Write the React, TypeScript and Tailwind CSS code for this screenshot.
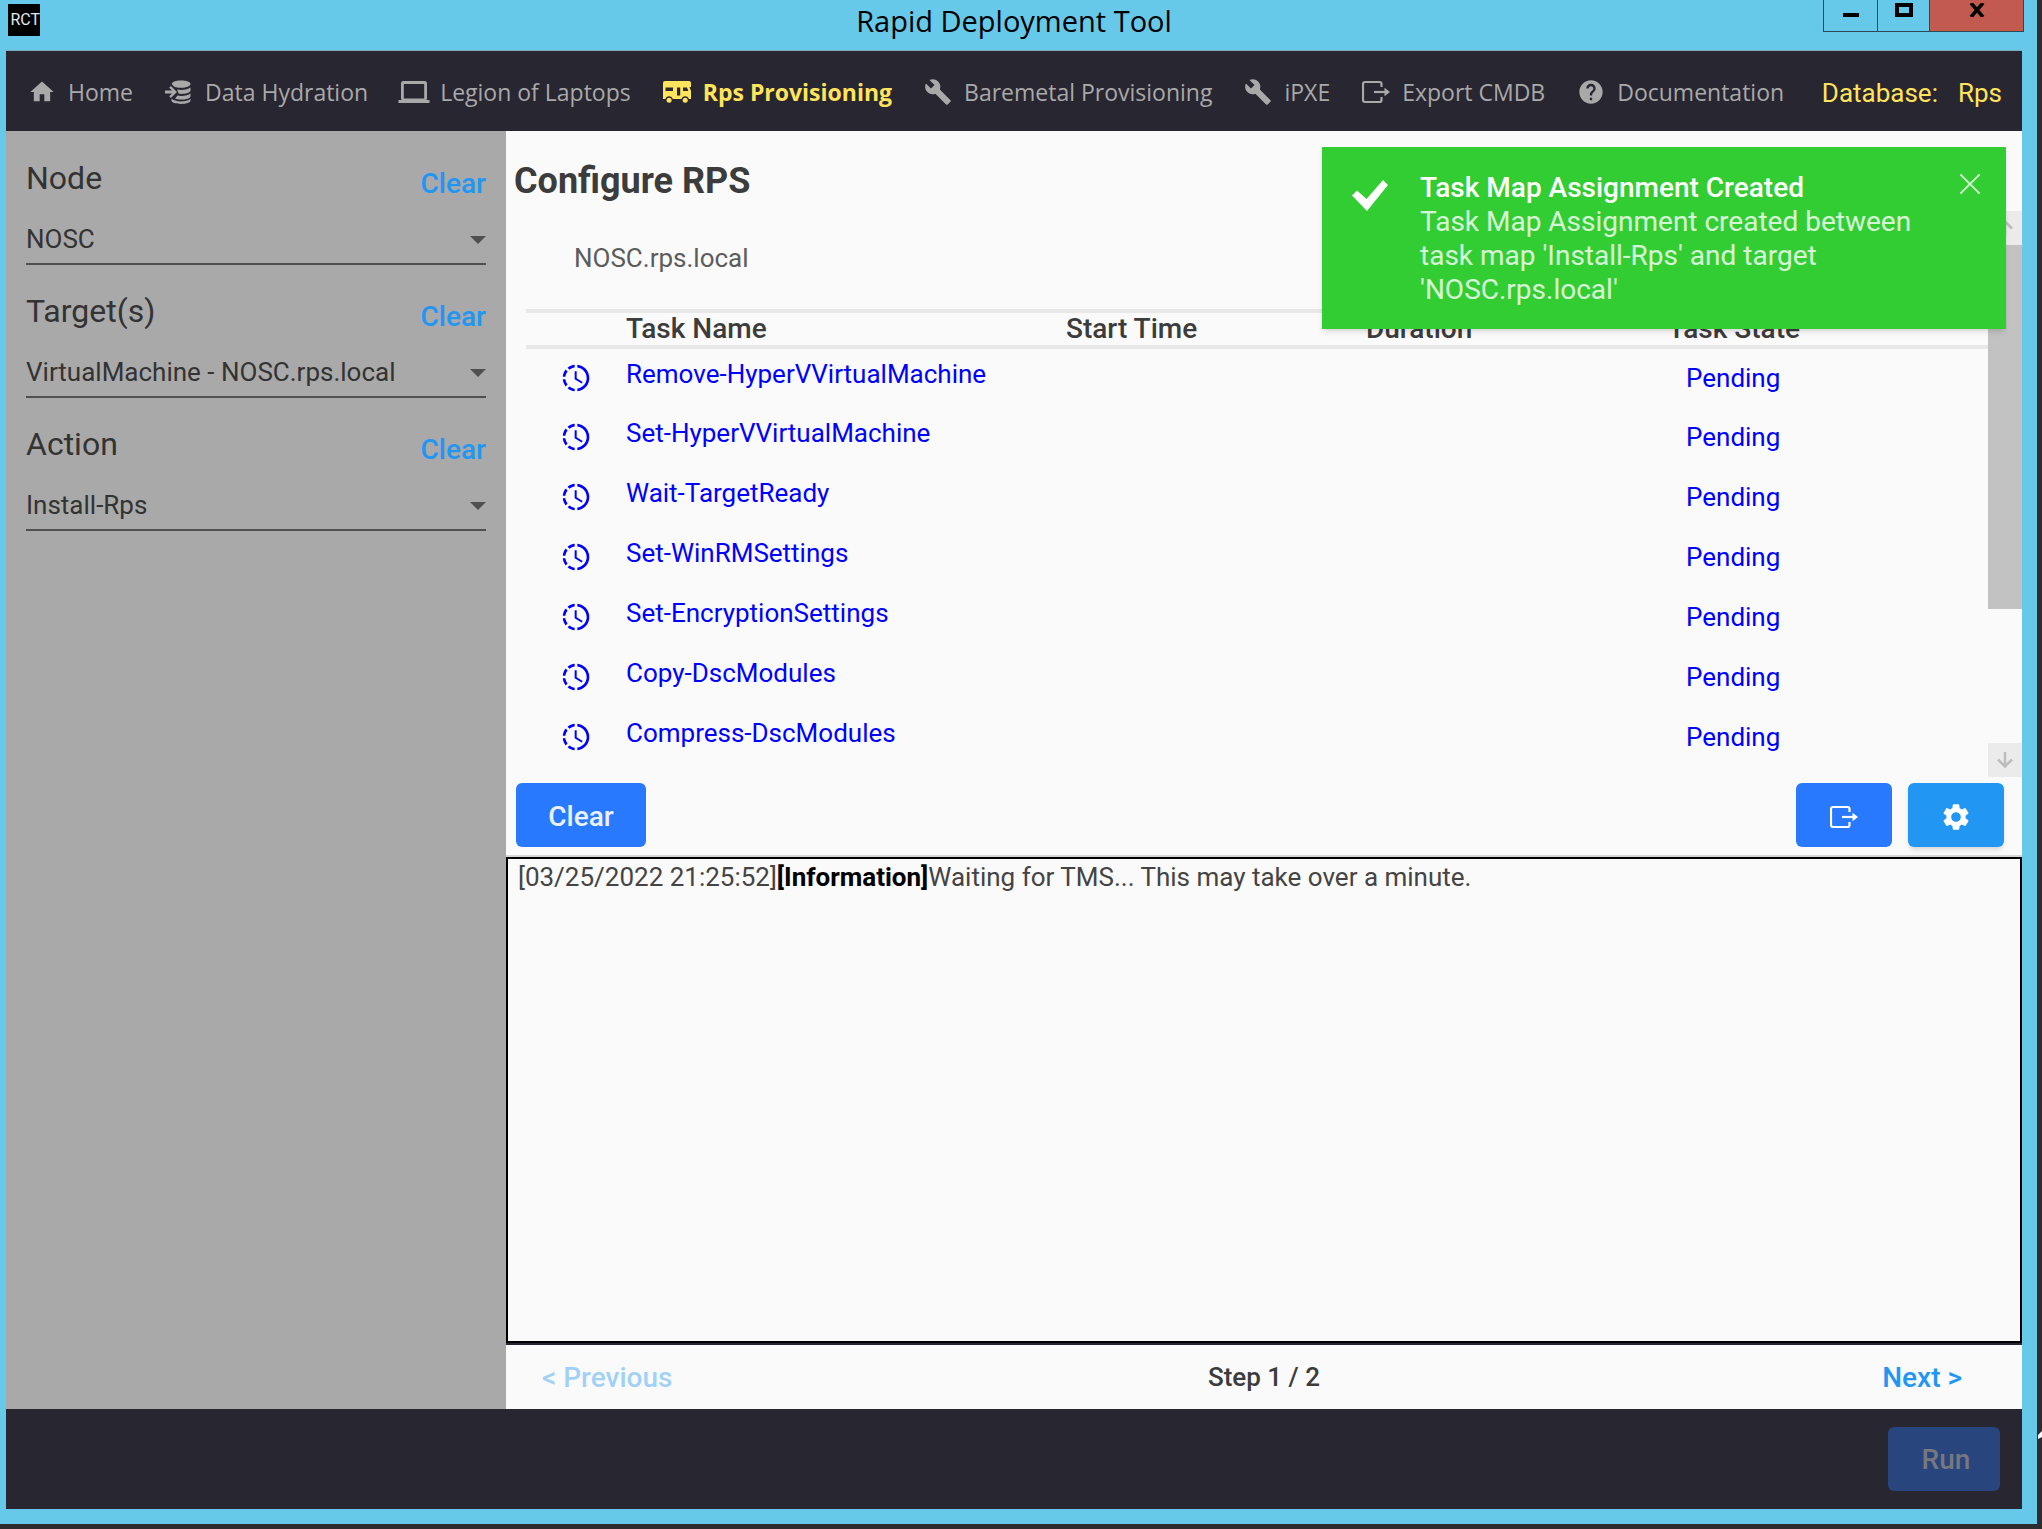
import type { ReactNode } from "react";
import { MdHome, MdBuild, MdHelp, MdSettings } from "react-icons/md";

type IconProps = { className?: string };

const DatabaseImportIcon = ({ className }: IconProps) => (
  <svg viewBox="0 0 28 28" className={className} fill="currentColor" aria-hidden="true">
    <path d="M16 2.500c5.500 0 9.500 1.500 9.500 3.500s-4 3.800-9.500 3.800c-2.600 0-5-.4-6.700-1L6.800 6.300C6.600 4 10.500 2.500 16 2.500z" />
    <path d="M12 11.600c1.300.2 2.600.3 4 .3 4.200 0 7.800-.9 9.500-2.600v3.200c0 1.900-4 3.400-9.500 3.400-.8 0-1.500 0-2.200-.1z" />
    <path d="M12.500 17.600c1.100.2 2.300.3 3.500.3 4.200 0 7.800-.9 9.500-2.600v2.900c0 1.900-4 3.400-9.500 3.400-2.300 0-4.400-.3-6-.8z" />
    <path d="M6.500 20.600c1.700 1.900 5.300 2.800 9.500 2.800s7.800-.9 9.500-2.600v1.800c0 1.900-4 3.400-9.500 3.400s-9.500-1.500-9.500-3.400z" />
    <path d="M0 12.600h7L4.200 9.800l1.700-1.700 6.100 5.900-6.100 5.900-1.700-1.700L7 15.400H0z" />
  </svg>
);

const LaptopIcon = ({ className }: IconProps) => (
  <svg viewBox="0 0 32 28" className={className} fill="currentColor" aria-hidden="true">
    <path
      fillRule="evenodd"
      d="M5.500 3h21A2.500 2.500 0 0 1 29 5.500v15a2 2 0 0 1-1 1.500h3.500v3H.5v-3H4a2 2 0 0 1-1-1.500v-15A2.500 2.500 0 0 1 5.500 3zm.3 3v14.500h20.400V6z"
    />
  </svg>
);

const RvIcon = ({ className }: IconProps) => (
  <svg viewBox="0 0 28 28" className={className} fill="currentColor" aria-hidden="true">
    <path
      fillRule="evenodd"
      d="M2 3h24a2 2 0 0 1 2 2v4h-1.500l1.500 4v8h-2.200a3.700 3.700 0 0 0-7.200 0H9.700a3.700 3.700 0 0 0-7.200 0H0V5a2 2 0 0 1 2-2zM2.500 9.500V13H10V9.500zm11.500 0V17.500h3.200V9.500zm6 0V13h5.300L24 9.500z"
    />
    <circle cx="6.100" cy="22.300" r="2.500" />
    <circle cx="22.200" cy="22.300" r="2.500" />
  </svg>
);

const ExportIcon = ({ className }: IconProps) => (
  <svg viewBox="0 0 28 28" className={className} fill="none" stroke="currentColor" strokeWidth="2.200" aria-hidden="true">
    <path d="M19.500 9V6a2 2 0 0 0-2-2H3a2 2 0 0 0-2 2v16a2 2 0 0 0 2 2h14.500a2 2 0 0 0 2-2v-3" />
    <path d="M12 14h13" />
    <path d="M22.500 9.800 28 14l-5.500 4.200z" fill="currentColor" stroke="none" />
  </svg>
);

const ProgressClockIcon = ({ className }: IconProps) => (
  <svg viewBox="0 0 24 24" className={className} fill="currentColor" aria-hidden="true">
    <path d="M13,2.03V2.05L13,4.05C17.39,4.59 20.5,8.58 19.96,12.97C19.5,16.61 16.64,19.5 13,19.93V21.93C18.5,21.38 22.5,16.5 21.95,11C21.5,6.25 17.73,2.5 13,2.03M11,2.06C9.05,2.25 7.19,3 5.67,4.26L7.1,5.74C8.22,4.84 9.57,4.26 11,4.06V2.06M4.26,5.67C3,7.19 2.25,9.04 2.05,11H4.05C4.24,9.58 4.8,8.23 5.69,7.1L4.26,5.67M2.06,13C2.26,14.96 3.03,16.81 4.27,18.33L5.69,16.9C4.81,15.77 4.24,14.42 4.06,13H2.06M7.1,18.37L5.67,19.74C7.18,21 9.04,21.79 11,22V20C9.58,19.82 8.23,19.25 7.1,18.37M12.5,7V12.25L17,14.92L16.25,16.15L11,13V7H12.5Z" />
  </svg>
);

const CheckIcon = ({ className }: IconProps) => (
  <svg viewBox="0 0 36 32" className={className} fill="currentColor" aria-hidden="true">
    <path d="M31 1l5 5-21 26L0 16.500l5-5 9.500 8.500z" />
  </svg>
);

const CloseIcon = ({ className }: IconProps) => (
  <svg viewBox="0 0 20 20" className={className} fill="none" stroke="currentColor" strokeWidth="1.800" aria-hidden="true">
    <path d="M0 0l20 20M20 0L0 20" />
  </svg>
);

const ArrowIcon = ({ className }: IconProps) => (
  <svg viewBox="0 0 16 16" className={className} fill="none" stroke="currentColor" strokeWidth="2.500" aria-hidden="true">
    <path d="M8 0v14M1 7.500l7 7 7-7" />
  </svg>
);

const navItems: { label: string; icon: ReactNode; active?: boolean }[] = [
  { label: "Home", icon: <MdHome className="size-7" /> },
  { label: "Data Hydration", icon: <DatabaseImportIcon className="size-7" /> },
  { label: "Legion of Laptops", icon: <LaptopIcon className="-mx-0.5 h-7 w-8" /> },
  { label: "Rps Provisioning", icon: <RvIcon className="size-7" />, active: true },
  { label: "Baremetal Provisioning", icon: <MdBuild className="size-7" /> },
  { label: "iPXE", icon: <MdBuild className="size-7" /> },
  { label: "Export CMDB", icon: <ExportIcon className="size-7" /> },
  { label: "Documentation", icon: <MdHelp className="size-7" /> },
];

const fields = [
  { id: "node", label: "Node", value: "NOSC" },
  { id: "targets", label: "Target(s)", value: "VirtualMachine - NOSC.rps.local" },
  { id: "action", label: "Action", value: "Install-Rps" },
];

const tasks = [
  "Remove-HyperVVirtualMachine",
  "Set-HyperVVirtualMachine",
  "Wait-TargetReady",
  "Set-WinRMSettings",
  "Set-EncryptionSettings",
  "Copy-DscModules",
  "Compress-DscModules",
];

function TitleBar() {
  return (
    <header className="relative flex h-[51px] shrink-0 items-start justify-center border-b border-[#7fa9bd]">
      <div className="absolute left-0.5 top-1 flex size-8 items-center justify-end overflow-hidden bg-black font-['Roboto',sans-serif] text-base text-gray-200">
        RCT
      </div>
      <h1 className="font-['Open_Sans',sans-serif] text-[29px] leading-[42px] text-black">Rapid Deployment Tool</h1>
      <div className="absolute -right-0.5 top-0 flex h-8 border-x border-b border-[#2c4a55] text-black">
        <button aria-label="Minimize" className="flex w-[54px] justify-center border-r border-[#2c4a55] pt-[13px]">
          <span className="h-1 w-4 bg-black" />
        </button>
        <button aria-label="Maximize" className="flex w-[52px] justify-center border-r border-[#2c4a55] pt-[3px]">
          <span className="h-3.5 w-[18px] border-4 border-black" />
        </button>
        <button aria-label="Close" className="flex w-[93px] justify-center bg-[#c35a50] pt-[3px]">
          <svg viewBox="0 0 16 14" className="h-3.5 w-4" fill="none" stroke="currentColor" strokeWidth="3.500" aria-hidden="true">
            <path d="M2 0l12 14M14 0L2 14" />
          </svg>
        </button>
      </div>
    </header>
  );
}

function NavBar() {
  return (
    <nav className="flex h-20 shrink-0 items-center justify-between bg-[#282631] pl-[22px] pr-5 whitespace-nowrap text-[#a9a9a9]">
      <div className="flex items-center gap-8 pt-0.5 font-['Open_Sans',sans-serif] text-[23px]">
        {navItems.map((item) => (
          <a
            key={item.label}
            href="#"
            className={item.active ? "flex items-center gap-3 font-bold text-[#ffe45c]" : "flex items-center gap-3"}
          >
            {item.icon}
            {item.label}
          </a>
        ))}
      </div>
      <p className="flex gap-5 pt-1 text-[26px] text-[#ffe45c]">
        <span>Database:</span>
        <span>Rps</span>
      </p>
    </nav>
  );
}

function Sidebar() {
  return (
    <aside className="flex w-[500px] shrink-0 flex-col bg-[#a9a9a9] px-5 pt-6 text-[#333]">
      {fields.map((field) => (
        <div key={field.id} className="h-[133px]">
          <div className="flex h-14 items-center justify-between">
            <label htmlFor={field.id} className="pb-2.5 text-[32px] leading-10">
              {field.label}
            </label>
            <button className="pt-0.5 text-[28px] leading-9 font-medium text-[#2196f3]">Clear</button>
          </div>
          <div className="relative">
            <select
              id={field.id}
              className="h-[54px] w-full appearance-none border-b-2 border-[#505050] bg-transparent pt-1 text-[26px] outline-none"
            >
              <option>{field.value}</option>
            </select>
            <svg viewBox="0 0 16 8" className="pointer-events-none absolute right-0 top-[25px] h-2 w-4 text-[#505050]" fill="currentColor" aria-hidden="true">
              <path d="M0 0h16L8 8z" />
            </svg>
          </div>
        </div>
      ))}
    </aside>
  );
}

function TaskTable() {
  return (
    <section className="flex h-[566px] shrink-0">
      <div className="min-w-0 flex-1 pl-5">
        <p className="flex h-[98px] items-center pb-1 pl-12 text-[26px] text-[#5c5c5c]">NOSC.rps.local</p>
        <table className="w-full table-fixed border-collapse text-[26px]">
          <colgroup>
            <col className="w-[100px]" />
            <col className="w-[440px]" />
            <col className="w-[300px]" />
            <col className="w-[302px]" />
            <col />
          </colgroup>
          <thead>
            <tr className="border-y-4 border-[#e8e8e8] text-left text-[28px] text-[#3c3c3c]">
              <th aria-label="Status" />
              <th className="p-0 leading-8 font-medium">Task Name</th>
              <th className="p-0 leading-8 font-medium">Start Time</th>
              <th className="p-0 leading-8 font-medium">Duration</th>
              <th className="p-0 leading-8 font-medium">Task State</th>
            </tr>
          </thead>
          <tbody>
            {tasks.map((task) => (
              <tr key={task} className="h-[60px] text-[#0000ff]">
                <td className="p-0 pl-[34px]">
                  <ProgressClockIcon className="size-8" />
                </td>
                <td className="p-0 pb-2">{task}</td>
                <td />
                <td />
                <td className="p-0 pl-[18px]">Pending</td>
              </tr>
            ))}
          </tbody>
        </table>
      </div>
      <div className="flex w-[34px] shrink-0 flex-col justify-between bg-[#fafafa]">
        <div>
          <div className="flex h-[34px] items-center justify-center bg-[#ebebeb] text-[#bdbdbd]">
            <ArrowIcon className="size-4 rotate-180" />
          </div>
          <div className="h-[364px] bg-[#c2c2c2]" />
        </div>
        <div className="flex h-[34px] items-center justify-center bg-[#ebebeb] text-[#bdbdbd]">
          <ArrowIcon className="size-4" />
        </div>
      </div>
    </section>
  );
}

function Toast() {
  return (
    <div role="alert" className="absolute right-4 top-4 flex h-[182px] w-[684px] bg-[#32cd32] pl-[30px] pr-[26px] shadow-md">
      <CheckIcon className="mt-8 h-8 w-9 shrink-0 text-white" />
      <div className="ml-8 flex-1 pt-6 text-[28px] leading-[34px] text-white/80">
        <h3 className="font-medium text-white">Task Map Assignment Created</h3>
        <p>Task Map Assignment created between task map 'Install-Rps' and target 'NOSC.rps.local'</p>
      </div>
      <button aria-label="Dismiss" className="mt-[27px] h-5 text-white/80">
        <CloseIcon className="size-5" />
      </button>
    </div>
  );
}

export default function App() {
  return (
    <div className="relative h-screen overflow-hidden bg-[#2d2d2f] pb-[5px] pr-[5px] font-['Roboto',sans-serif]">
      <div className="flex h-full flex-col bg-[#66c9e9] pb-[15px] pl-1.5 pr-[15px]">
        <TitleBar />
        <NavBar />
        <div className="relative flex min-h-0 flex-1">
          <Sidebar />
          <main className="flex min-w-0 flex-1 flex-col bg-[#fafafa]">
            <h2 className="h-20 shrink-0 pl-2 pt-[30px] text-4xl font-bold text-[#3c3c3c]">Configure RPS</h2>
            <TaskTable />
            <div className="flex h-20 shrink-0 items-start gap-4 border-b-2 border-[#d6d6d6] pl-2.5 pr-[18px] pt-1.5 text-white">
              <button className="mr-auto h-16 w-[130px] rounded-md bg-[#2979ff] pt-1 text-[28px] font-medium text-white/90">Clear</button>
              <button aria-label="Export" className="flex h-16 w-24 items-center justify-center rounded-md bg-[#2979ff] pt-1">
                <ExportIcon className="size-7" />
              </button>
              <button aria-label="Settings" className="flex h-16 w-24 items-center justify-center rounded-md bg-[#2196f3] pt-1 shadow-md">
                <MdSettings className="size-8" />
              </button>
            </div>
            <div className="min-h-0 flex-1 border-b-2 border-[#282631]">
              <p className="h-full border-2 border-black pl-2.5 pt-0.5 text-[26px] leading-8 text-[#444]">
                [03/25/2022 21:25:52]<b className="font-bold text-black">[Information]</b>Waiting for TMS... This may take over a minute.
              </p>
            </div>
            <div className="grid h-16 shrink-0 grid-cols-3 items-center px-9 text-[28px] font-medium text-[#2196f3]">
              <button disabled className="justify-self-start pt-0.5 opacity-40">
                &lt; Previous
              </button>
              <span className="text-center text-[26px] text-[#3c3c3c]">Step 1 / 2</span>
              <button className="justify-self-end pr-6 pt-0.5">Next &gt;</button>
            </div>
          </main>
          <Toast />
        </div>
        <footer className="flex h-[100px] shrink-0 items-center justify-end bg-[#282631] pr-[22px]">
          <button disabled className="h-16 w-28 rounded-md bg-[#28457e] pl-1 pt-0.5 text-[28px] font-medium text-[#77777f]">
            Run
          </button>
        </footer>
      </div>
      <svg viewBox="0 0 4 8" className="absolute bottom-[90px] right-0 h-2 w-1" fill="#fff" aria-hidden="true">
        <path d="M0 4L4 0v6L0 8z" />
      </svg>
    </div>
  );
}
